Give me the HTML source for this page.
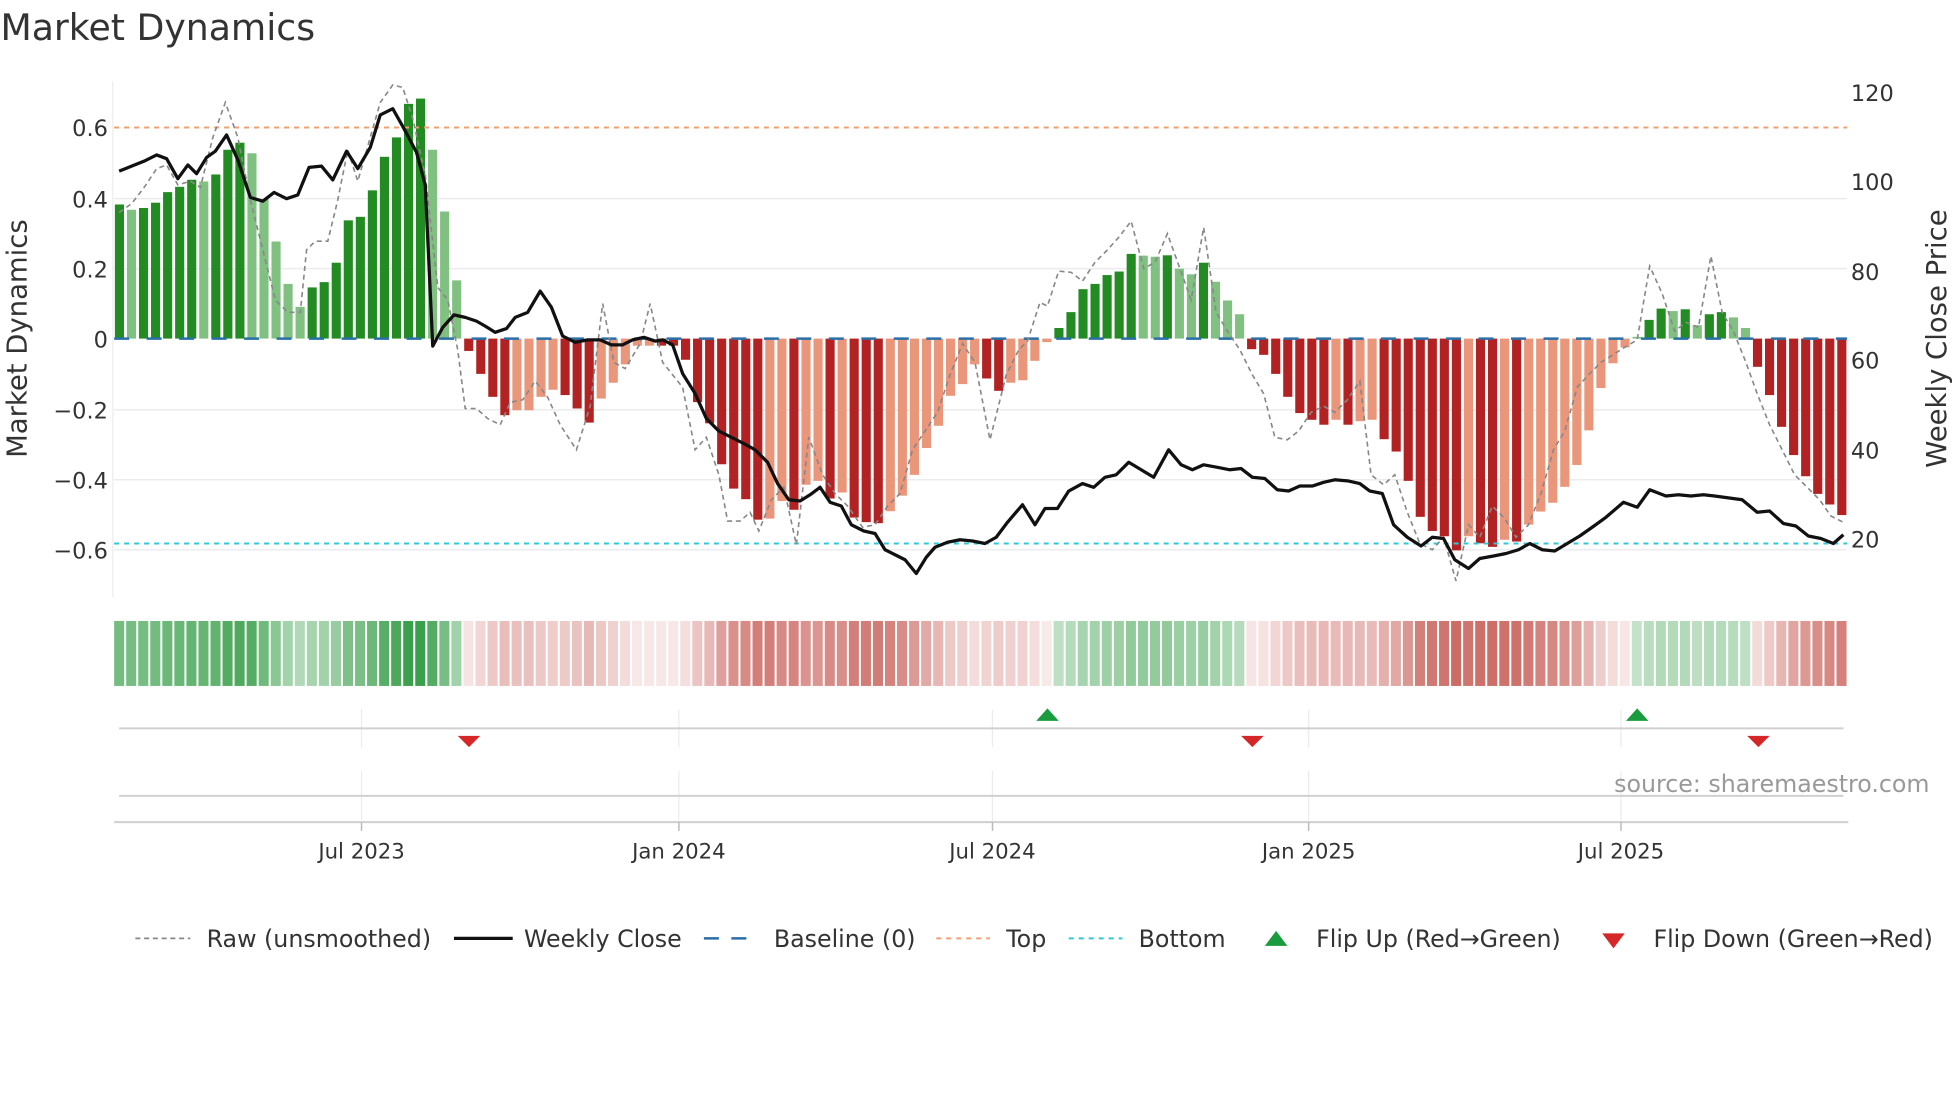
<!DOCTYPE html>
<html><head><meta charset="utf-8">
<style>
html,body{margin:0;padding:0;background:#fff;}
svg{display:block;}
text{font-family:"DejaVu Sans","Liberation Sans",sans-serif;}
</style></head>
<body>
<svg id="s" width="1960" height="1102" viewBox="0 0 1568 882" xmlns="http://www.w3.org/2000/svg">
<rect width="1568" height="882" fill="#fff"/>
<text x="0" y="32" font-size="29" fill="#333">Market Dynamics</text>

<g stroke="#ececf0" stroke-width="1.2">
<line x1="91" x2="1478" y1="159" y2="159"/>
<line x1="91" x2="1478" y1="215" y2="215"/>
<line x1="91" x2="1478" y1="328" y2="328"/>
<line x1="91" x2="1478" y1="384" y2="384"/>
<line x1="91" x2="1478" y1="440" y2="440"/>
</g>
<line x1="90" x2="90" y1="65" y2="478" stroke="#ececec" stroke-width="1"/>

<g font-size="18" fill="#333" text-anchor="end">
<text x="86" y="109">0.6</text>
<text x="86" y="166">0.4</text>
<text x="86" y="222">0.2</text>
<text x="86" y="278">0</text>
<text x="86" y="335">−0.2</text>
<text x="86" y="391">−0.4</text>
<text x="86" y="447">−0.6</text>
</g>
<g font-size="18" fill="#333">
<text x="1481" y="81">120</text>
<text x="1481" y="152">100</text>
<text x="1481" y="224">80</text>
<text x="1481" y="295">60</text>
<text x="1481" y="367">40</text>
<text x="1481" y="438">20</text>
</g>
<text transform="translate(21,271) rotate(-90)" font-size="22" fill="#333" text-anchor="middle">Market Dynamics</text>
<text transform="translate(1557,271) rotate(-90)" font-size="22" fill="#333" text-anchor="middle">Weekly Close Price</text>

<g id="bars"></g>

<line x1="91" x2="1478" y1="102" y2="102" stroke="#f0a070" stroke-width="1.6" stroke-dasharray="4,4"/>
<line x1="91" x2="1478" y1="435" y2="435" stroke="#30c8d8" stroke-width="1.6" stroke-dasharray="4,4"/>
<line x1="91" x2="1478" y1="271" y2="271" stroke="#2a6fa8" stroke-width="2" stroke-dasharray="12,14"/>

<polyline fill="none" stroke="#888" stroke-width="1.3" stroke-dasharray="4,3" points="95,170 105,163 115,150 125,135 133,132 142,148 152,145 160,150 170,110 180,82 190,110 200,160 210,200 220,240 230,250 240,250 245,200 252,193 262,193 270,160 278,120 286,145 296,110 304,82 314,68 322,70 330,95 340,140 350,230 358,240 366,280 372,327 381,327 390,335 400,340 408,322 418,320 428,305 438,318 448,340 461,360 472,325 482,243 491,290 500,295 512,275 520,243 530,290 538,300 546,310 556,360 565,350 575,380 582,417 592,417 600,410 607,425 617,400 627,390 637,436 647,350 658,380 668,395 678,405 690,422 700,420 710,405 720,395 730,360 740,345 750,330 760,300 770,275 780,290 792,352 805,300 815,280 822,273 832,242 838,245 847,217 857,218 866,225 876,210 886,200 895,190 905,177 915,215 924,210 934,187 944,215 953,240 963,182 973,250 982,265 992,280 1002,300 1011,315 1020,350 1030,352 1039,345 1049,330 1059,325 1068,330 1078,320 1088,305 1097,380 1107,388 1116,380 1126,410 1136,435 1146,440 1155,430 1165,465 1175,420 1184,430 1194,405 1204,415 1213,430 1223,420 1233,395 1243,360 1252,345 1262,310 1271,300 1281,290 1300,278 1310,272 1320,213 1330,235 1340,265 1349,258 1359,262 1369,205 1378,250 1387,265 1397,290 1406,315 1416,340 1426,360 1436,380 1446,390 1456,400 1465,413 1475,418"/>

<polyline fill="none" stroke="#111" stroke-width="2.6" stroke-linejoin="round" points="95,137 105,133 115,129 125,124 133,127 142,143 150,132 157,139 165,126 172,121 181,108 190,128 200,158 210,161 219,154 229,159 238,156 247,134 257,133 266,144 277,121 286,135 296,118 304,92 314,87 323,103 333,122 340,148 346,277 354,262 363,252 372,254 381,257 388,261 396,266 405,263 412,254 422,250 432,233 441,246 450,269 460,274 470,272 480,272 489,276 498,276 506,272 515,270 524,273 530,272 538,276 546,299 556,315 565,335 575,345 585,350 595,355 604,360 614,370 622,387 631,400 640,401 648,396 656,390 664,402 673,405 681,420 691,425 700,427 708,440 716,444 724,448 733,459 741,446 748,438 758,434 768,432 778,433 788,435 797,430 806,418 818,404 828,420 836,407 846,407 855,393 866,387 875,390 884,382 893,380 903,370 913,376 923,382 935,360 945,372 954,376 963,372 974,374 984,376 993,375 1002,382 1012,383 1022,392 1031,393 1040,389 1050,389 1059,386 1068,384 1079,385 1088,387 1096,393 1106,395 1115,420 1126,430 1137,437 1146,430 1155,431 1164,448 1175,455 1184,447 1195,445 1205,443 1215,440 1224,435 1234,440 1244,441 1254,435 1264,429 1274,422 1285,414 1299,402 1310,406 1320,392 1333,397 1343,396 1353,397 1363,396 1372,397 1394,400 1406,410 1416,409 1427,419 1437,421 1447,429 1457,431 1467,435 1475,428"/>

<g id="strip"></g>

<g stroke="#ececec" stroke-width="1">
<line x1="289" x2="289" y1="568" y2="598"/><line x1="543" x2="543" y1="568" y2="598"/><line x1="794" x2="794" y1="568" y2="598"/><line x1="1047" x2="1047" y1="568" y2="598"/><line x1="1297" x2="1297" y1="568" y2="598"/>
<line x1="289" x2="289" y1="617" y2="657"/><line x1="543" x2="543" y1="617" y2="657"/><line x1="794" x2="794" y1="617" y2="657"/><line x1="1047" x2="1047" y1="617" y2="657"/><line x1="1297" x2="1297" y1="617" y2="657"/>
</g>
<line x1="95" x2="1475" y1="583" y2="583" stroke="#d0d0d0" stroke-width="1.6"/>
<line x1="95" x2="1475" y1="637" y2="637" stroke="#d0d0d0" stroke-width="1.6"/>
<line x1="91" x2="1479" y1="658" y2="658" stroke="#cfcfcf" stroke-width="1.6"/>
<g stroke="#bbb" stroke-width="1.2">
<line x1="289" x2="289" y1="658" y2="665"/><line x1="543" x2="543" y1="658" y2="665"/><line x1="794" x2="794" y1="658" y2="665"/><line x1="1047" x2="1047" y1="658" y2="665"/><line x1="1297" x2="1297" y1="658" y2="665"/>
</g>
<g fill="#d62728">
<polygon points="366,589 384,589 375,598"/>
<polygon points="993,589 1011,589 1002,598"/>
<polygon points="1398,589 1416,589 1407,598"/>
</g>
<g fill="#1a9c3e">
<polygon points="829,577 847,577 838,567"/>
<polygon points="1301,577 1319,577 1310,567"/>
</g>
<text x="1544" y="634" font-size="19" fill="#999" text-anchor="end">source: sharemaestro.com</text>

<g font-size="17" fill="#333" text-anchor="middle">
<text x="289" y="687">Jul 2023</text>
<text x="543" y="687">Jan 2024</text>
<text x="794" y="687">Jul 2024</text>
<text x="1047" y="687">Jan 2025</text>
<text x="1297" y="687">Jul 2025</text>
</g>

<g font-size="19" fill="#333">
<line x1="108" x2="152" y1="751" y2="751" stroke="#888" stroke-width="1.4" stroke-dasharray="4,3"/>
<text x="165" y="758">Raw (unsmoothed)</text>
<line x1="363" x2="410" y1="751" y2="751" stroke="#111" stroke-width="2.6"/>
<text x="419" y="758">Weekly Close</text>
<line x1="563" x2="606" y1="751" y2="751" stroke="#2a6fa8" stroke-width="2" stroke-dasharray="12,10"/>
<text x="619" y="758">Baseline (0)</text>
<line x1="749" x2="792" y1="751" y2="751" stroke="#f0a070" stroke-width="1.6" stroke-dasharray="4,4"/>
<text x="805" y="758">Top</text>
<line x1="855" x2="898" y1="751" y2="751" stroke="#30c8d8" stroke-width="1.6" stroke-dasharray="4,4"/>
<text x="911" y="758">Bottom</text>
<polygon points="1012,757 1030,757 1021,745" fill="#1a9c3e"/>
<text x="1053" y="758">Flip Up (Red→Green)</text>
<polygon points="1282,747 1300,747 1291,759" fill="#d62728"/>
<text x="1323" y="758">Flip Down (Green→Red)</text>
</g>
</svg>
<script>
var D=[
[.38,1],[.365,0],[.37,1],[.385,1],[.415,1],[.43,1],[.45,1],[.445,0],[.465,1],[.535,1],[.555,1],[.525,0],[.395,0],[.275,0],[.155,0],[.09,0],[.145,1],[.16,1],[.215,1],[.335,1],[.345,1],[.42,1],[.515,1],[.57,1],[.665,1],[.68,1],[.535,0],[.36,0],[.165,0],
[-.035,1],[-.10,1],[-.165,1],[-.217,1],[-.203,0],[-.203,0],[-.165,0],[-.145,0],[-.16,1],[-.198,1],[-.238,1],[-.17,0],[-.125,0],[-.073,0],[-.02,0],[-.02,0],[-.02,1],[-.02,1],[-.06,1],[-.18,1],[-.24,1],[-.356,1],[-.425,1],[-.455,1],[-.513,1],[-.51,0],[-.46,0],[-.485,1],[-.414,0],[-.403,0],[-.453,1],[-.436,0],[-.507,1],[-.52,1],[-.523,1],[-.489,0],[-.445,0],[-.386,0],[-.31,0],[-.247,0],[-.162,0],[-.129,0],[-.073,0],[-.113,1],[-.148,1],[-.125,0],[-.118,0],[-.063,0],[-.01,0],
[.03,1],[.075,1],[.14,1],[.155,1],[.18,1],[.19,1],[.24,1],[.235,0],[.232,0],[.236,1],[.198,0],[.182,0],[.215,1],[.161,0],[.108,0],[.069,0],
[-.03,1],[-.046,1],[-.1,1],[-.165,1],[-.211,1],[-.23,1],[-.244,1],[-.23,0],[-.244,1],[-.234,0],[-.23,0],[-.285,1],[-.32,1],[-.403,1],[-.505,1],[-.545,1],[-.56,1],[-.6,1],[-.56,0],[-.58,1],[-.59,1],[-.57,0],[-.575,1],[-.527,0],[-.49,0],[-.465,0],[-.42,0],[-.358,0],[-.26,0],[-.14,0],[-.07,0],[-.025,0],
[.005,0],[.053,1],[.085,1],[.078,0],[.083,1],[.038,0],[.069,1],[.075,1],[.06,0],[.03,0],
[-.08,1],[-.16,1],[-.25,1],[-.33,1],[-.39,1],[-.44,1],[-.47,1],[-.5,1]];
var NS="http://www.w3.org/2000/svg",b=document.getElementById("bars"),st=document.getElementById("strip");
var P=9.64,X0=91.6,W=7.3,Z=271,K=282.5;
function R(p,x,y,w,h,f){var r=document.createElementNS(NS,"rect");r.setAttribute("x",x);r.setAttribute("y",y);r.setAttribute("width",w);r.setAttribute("height",h);r.setAttribute("fill",f);p.appendChild(r);}
for(var i=0;i<D.length;i++){var v=D[i][0],d=D[i][1],x=X0+i*P,h=Math.abs(v)*K;
var f=v>=0?(d?"#228b22":"#80c080"):(d?"#b22222":"#e9967a");
if(h>0.5)R(b,x,v>=0?Z-h:Z,W,h,f);
var a=Math.abs(v);var c;
if(v>=0){var t=Math.min(1,0.3+a/0.7*0.75);c="rgb("+Math.round(255-(255-58)*t)+","+Math.round(255-(255-160)*t)+","+Math.round(255-(255-75)*t)+")";}
else{var t=Math.min(1,0.12+a/0.6*0.8);c="rgb("+Math.round(255-(255-200)*t)+","+Math.round(255-(255-95)*t)+","+Math.round(255-(255-88)*t)+")";}
R(st,91+i*P,497,P-1.6,52,c);}
</script>
</body></html>
